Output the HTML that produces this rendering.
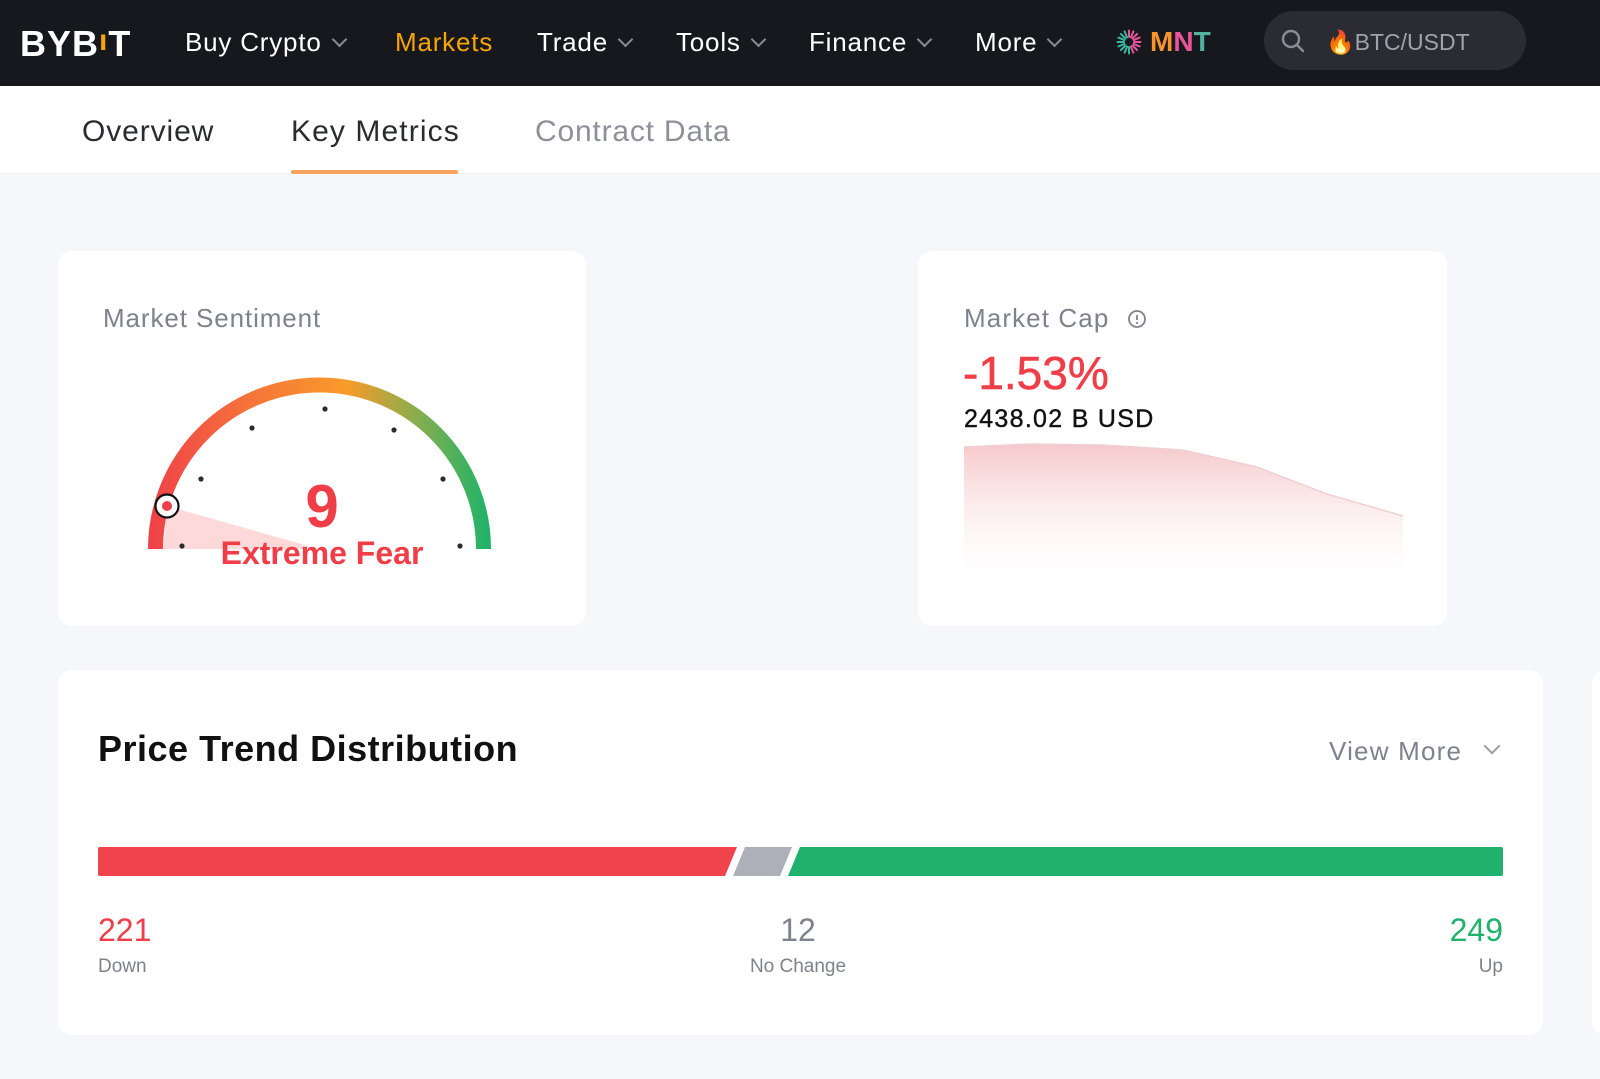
<!DOCTYPE html>
<html><head><meta charset="utf-8"><style>
*{margin:0;padding:0;box-sizing:border-box}
body{width:1600px;height:1079px;overflow:hidden;background:#f6f7fa;font-family:"Liberation Sans",Arial,sans-serif;position:relative}
.a{position:absolute;white-space:nowrap}
.nav{position:absolute;left:0;top:0;width:1600px;height:86px;background:#17181e}
.ni{position:absolute;top:26px;font-size:26px;color:#fff;line-height:32px;letter-spacing:0.8px}
.chev{display:inline-block;width:11px;height:11px;border-right:2px solid #8a8d96;border-bottom:2px solid #8a8d96;transform:rotate(45deg);margin-left:12px;position:relative;top:-6px}
.card{position:absolute;background:#fff;border-radius:14px}
.tab{letter-spacing:0.9px}
</style></head><body>
<div class="nav">
  <div class="a" style="left:20px;top:24px;font-size:36px;font-weight:bold;color:#fff;letter-spacing:1px;line-height:40px">BYB<span style="color:#f7a600;font-size:30px;position:relative;top:-6px">ı</span>T</div>
  <div class="ni" style="left:185px">Buy Crypto<span class="chev"></span></div>
  <div class="ni" style="left:395px;color:#f7a600">Markets</div>
  <div class="ni" style="left:537px">Trade<span class="chev"></span></div>
  <div class="ni" style="left:676px">Tools<span class="chev"></span></div>
  <div class="ni" style="left:809px">Finance<span class="chev"></span></div>
  <div class="ni" style="left:975px">More<span class="chev"></span></div>
  <svg class="a" style="left:1116px;top:29px" width="26" height="26" viewBox="0 0 26 26">
    <g stroke-width="2" stroke-linecap="round">
      <line x1="13" y1="1.5" x2="13" y2="8" stroke="#e9559b"/>
      <line x1="17.4" y1="2.4" x2="14.9" y2="8.4" stroke="#e9559b"/>
      <line x1="21.1" y1="4.9" x2="16.5" y2="9.5" stroke="#e9559b"/>
      <line x1="23.6" y1="8.6" x2="17.6" y2="11.1" stroke="#e9559b"/>
      <line x1="24.5" y1="13" x2="18" y2="13" stroke="#e9559b"/>
      <line x1="23.6" y1="17.4" x2="17.6" y2="14.9" stroke="#e9559b"/>
      <line x1="21.1" y1="21.1" x2="16.5" y2="16.5" stroke="#e9559b"/>
      <line x1="17.4" y1="23.6" x2="14.9" y2="17.6" stroke="#e9559b"/>
      <line x1="13" y1="24.5" x2="13" y2="18" stroke="#36b8a0"/>
      <line x1="8.6" y1="23.6" x2="11.1" y2="17.6" stroke="#36b8a0"/>
      <line x1="4.9" y1="21.1" x2="9.5" y2="16.5" stroke="#36b8a0"/>
      <line x1="2.4" y1="17.4" x2="8.4" y2="14.9" stroke="#36b8a0"/>
      <line x1="1.5" y1="13" x2="8" y2="13" stroke="#36b8a0"/>
      <line x1="2.4" y1="8.6" x2="8.4" y2="11.1" stroke="#36b8a0"/>
      <line x1="4.9" y1="4.9" x2="9.5" y2="9.5" stroke="#36b8a0"/>
      <line x1="8.6" y1="2.4" x2="11.1" y2="8.4" stroke="#36b8a0"/>
    </g></svg>
  <div class="a" style="left:1150px;top:25px;font-size:28px;font-weight:bold;line-height:34px"><span style="color:#f7932e">M</span><span style="color:#e9559b">N</span><span style="color:#4fb3a0">T</span></div>
  <div class="a" style="left:1264px;top:11px;width:262px;height:59px;border-radius:30px;background:#2b2c33"></div>
  <svg class="a" style="left:1281px;top:29px" width="24" height="24" viewBox="0 0 24 24"><circle cx="10" cy="10" r="8" fill="none" stroke="#8a8d96" stroke-width="2.4"/><line x1="16" y1="16" x2="22" y2="22" stroke="#8a8d96" stroke-width="2.4" stroke-linecap="round"/></svg>
  <div class="a" style="left:1326px;top:28px;font-size:23px;color:#a0a3ab;line-height:28px">🔥BTC/USDT</div>
</div>
<div class="a" style="left:0;top:86px;width:1600px;height:88px;background:#fff;border-bottom:1px solid #eceef2"></div>
<div class="a tab" style="left:82px;top:115px;font-size:30px;color:#2a2b30">Overview</div>
<div class="a tab" style="left:291px;top:115px;font-size:30px;color:#2a2b30;letter-spacing:1.1px">Key Metrics</div>
<div class="a" style="left:291px;top:170px;width:167px;height:4px;background:#f7a35c;border-radius:2px"></div>
<div class="a tab" style="left:535px;top:115px;font-size:30px;color:#8d9099;letter-spacing:0.8px">Contract Data</div>

<div class="card" style="left:58px;top:251px;width:528px;height:375px"></div>
<div class="a" style="left:103px;top:303px;font-size:26px;color:#7e828c;letter-spacing:0.9px">Market Sentiment</div>
<svg class="a" style="left:130px;top:360px" width="380" height="220" viewBox="130 360 380 220">
  <defs><linearGradient id="g" x1="148" y1="0" x2="491" y2="0" gradientUnits="userSpaceOnUse">
    <stop offset="0" stop-color="#ef4048"/><stop offset="0.3" stop-color="#f6743a"/><stop offset="0.58" stop-color="#f99b2a"/><stop offset="0.8" stop-color="#7fae50"/><stop offset="1" stop-color="#1cb36a"/></linearGradient></defs>
  <path d="M163.5 549 L167 506 L319 549 Z" fill="#fdd9da"/>
  <path d="M155.5 549 A164 164 0 0 1 483.5 549" fill="none" stroke="url(#g)" stroke-width="15"/>
  <g fill="#2a2b30"><circle cx="325" cy="409" r="2.6"/><circle cx="252" cy="428" r="2.6"/><circle cx="394" cy="430" r="2.6"/><circle cx="201" cy="479" r="2.6"/><circle cx="443" cy="479" r="2.6"/><circle cx="182" cy="546" r="2.6"/><circle cx="460" cy="546" r="2.6"/></g>
  <circle cx="167" cy="506" r="11.5" fill="#fff" stroke="#111" stroke-width="2.2"/>
  <circle cx="167" cy="506" r="5" fill="#ef4048"/>
  <text x="322" y="527" text-anchor="middle" font-family="Liberation Sans" font-weight="bold" font-size="60" fill="#ef3e48">9</text>
  <text x="322" y="564" text-anchor="middle" font-family="Liberation Sans" font-weight="bold" font-size="32" fill="#ef3e48">Extreme Fear</text>
</svg>

<div class="card" style="left:918px;top:251px;width:529px;height:375px"></div>
<div class="a" style="left:964px;top:303px;font-size:26px;color:#7e828c;letter-spacing:1.1px">Market Cap</div>
<svg class="a" style="left:1127px;top:309px" width="20" height="20" viewBox="0 0 20 20"><circle cx="10" cy="10" r="8" fill="none" stroke="#7e828c" stroke-width="1.8"/><line x1="10" y1="6" x2="10" y2="11" stroke="#7e828c" stroke-width="1.8"/><circle cx="10" cy="14" r="1.1" fill="#7e828c"/></svg>
<div class="a" style="left:963px;top:346px;font-size:46px;color:#ef3e48;-webkit-text-stroke:0.6px #ef3e48">-1.53%</div>
<div class="a" style="left:964px;top:405px;font-size:25px;color:#111;letter-spacing:1.3px;-webkit-text-stroke:0.4px #111">2438.02 B USD</div>
<svg class="a" style="left:964px;top:440px" width="440" height="160" viewBox="964 440 440 160">
  <defs><linearGradient id="f" x1="0" y1="0" x2="0" y2="1"><stop offset="0" stop-color="#f6c8ca"/><stop offset="1" stop-color="#fff" stop-opacity="0"/></linearGradient></defs>
  <path d="M964 447 L1030 444 L1103 445 L1183 450 L1257 467 L1327 494 L1403 516 L1403 595 L964 595 Z" fill="url(#f)"/>
  <path d="M964 447 L1030 444 L1103 445 L1183 450 L1257 467 L1327 494 L1403 516" fill="none" stroke="#f0d0d4" stroke-width="1.5"/>
</svg>

<div class="card" style="left:58px;top:670px;width:1485px;height:365px"></div>
<div class="card" style="left:1592px;top:670px;width:100px;height:365px"></div>
<div class="a" style="left:98px;top:728px;font-size:36px;font-weight:bold;color:#111;letter-spacing:0.5px">Price Trend Distribution</div>
<div class="a" style="left:1329px;top:736px;font-size:26px;color:#7e828c;letter-spacing:1.2px">View More</div>
<div class="a" style="left:1486px;top:740px;width:12px;height:12px;border-right:2px solid #9a9da5;border-bottom:2px solid #9a9da5;transform:rotate(45deg)"></div>
<svg class="a" style="left:98px;top:847px" width="1406" height="30" viewBox="98 847 1406 30">
  <path d="M100 847 L737 847 L725 876 L100 876 Q98 876 98 874 L98 849 Q98 847 100 847 Z" fill="#f0444c"/>
  <path d="M745 847 L792 847 L780 876 L733 876 Z" fill="#adb0b8"/>
  <path d="M800 847 L1501 847 Q1503 847 1503 849 L1503 874 Q1503 876 1501 876 L788 876 Z" fill="#20b26c"/>
</svg>
<div class="a" style="left:98px;top:912px;font-size:32px;color:#ef3e48">221</div>
<div class="a" style="left:98px;top:956px;font-size:19px;color:#7e828c">Down</div>
<div class="a" style="left:798px;top:912px;font-size:32px;color:#7e828c;transform:translateX(-50%)">12</div>
<div class="a" style="left:798px;top:956px;font-size:19px;color:#7e828c;transform:translateX(-50%)">No Change</div>
<div class="a" style="right:97px;top:912px;font-size:32px;color:#20b26c">249</div>
<div class="a" style="right:97px;top:956px;font-size:19px;color:#7e828c">Up</div>
</body></html>
